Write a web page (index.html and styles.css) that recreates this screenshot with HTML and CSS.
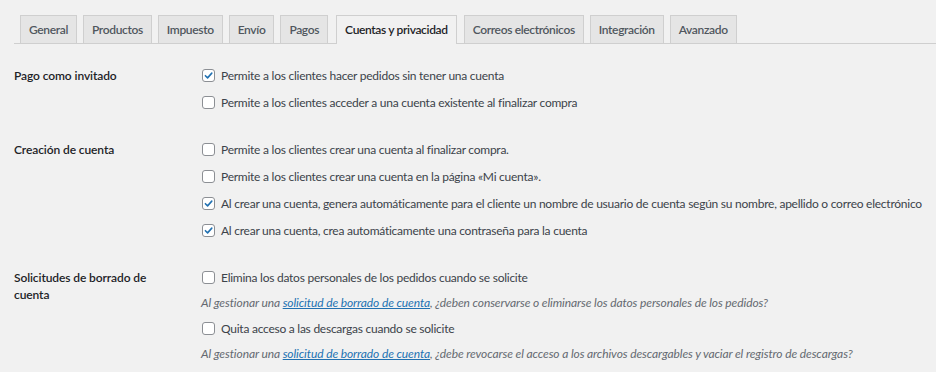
FILE: index.html
```html
<!DOCTYPE html>
<html lang="es">
<head>
<meta charset="utf-8">
<title>Cuentas y privacidad</title>
<link rel="stylesheet" href="styles.css">
</head>
<body>
<nav class="tabs">
  <a class="tab">General</a>
  <a class="tab">Productos</a>
  <a class="tab">Impuesto</a>
  <a class="tab">Envío</a>
  <a class="tab">Pagos</a>
  <a class="tab active">Cuentas y privacidad</a>
  <a class="tab">Correos electrónicos</a>
  <a class="tab">Integración</a>
  <a class="tab">Avanzado</a>
</nav>

<div class="settings">
  <section class="row">
    <div class="label">Pago como invitado</div>
    <div class="field">
      <label class="opt"><span class="cb checked"><svg viewBox="0 0 12 12"><path d="M2.6 6.2 5 8.6 9.6 3.4"/></svg></span><span>Permite a los clientes hacer pedidos sin tener una cuenta</span></label>
      <label class="opt"><span class="cb"></span><span>Permite a los clientes acceder a una cuenta existente al finalizar compra</span></label>
    </div>
  </section>

  <section class="row">
    <div class="label">Creación de cuenta</div>
    <div class="field">
      <label class="opt"><span class="cb"></span><span>Permite a los clientes crear una cuenta al finalizar compra.</span></label>
      <label class="opt"><span class="cb"></span><span>Permite a los clientes crear una cuenta en la página «Mi cuenta».</span></label>
      <label class="opt"><span class="cb checked"><svg viewBox="0 0 12 12"><path d="M2.6 6.2 5 8.6 9.6 3.4"/></svg></span><span>Al crear una cuenta, genera automáticamente para el cliente un nombre de usuario de cuenta según su nombre, apellido o correo electrónico</span></label>
      <label class="opt"><span class="cb checked"><svg viewBox="0 0 12 12"><path d="M2.6 6.2 5 8.6 9.6 3.4"/></svg></span><span>Al crear una cuenta, crea automáticamente una contraseña para la cuenta</span></label>
    </div>
  </section>

  <section class="row">
    <div class="label">Solicitudes de borrado de cuenta</div>
    <div class="field">
      <label class="opt"><span class="cb"></span><span>Elimina los datos personales de los pedidos cuando se solicite</span></label>
      <p class="help">Al gestionar una <a href="#">solicitud de borrado de cuenta</a>, ¿deben conservarse o eliminarse los datos personales de los pedidos?</p>
      <label class="opt"><span class="cb"></span><span>Quita acceso a las descargas cuando se solicite</span></label>
      <p class="help">Al gestionar una <a href="#">solicitud de borrado de cuenta</a>, ¿debe revocarse el acceso a los archivos descargables y vaciar el registro de descargas?</p>
    </div>
  </section>
</div>
</body>
</html>
```

FILE: styles.css
```css
html, body {
  margin: 0;
  padding: 0;
  background: #f1f1f1;
}

body {
  font-family: Lato, "Open Sans", sans-serif;
  font-size: 12px;
  color: #3c434a;
  padding-left: 14px;
}

.tabs {
  display: flex;
  gap: 6px;
  padding: 15px 0 0 6px;
  border-bottom: 1px solid #cfcfcf;
}

.tab {
  display: block;
  height: 27px;
  line-height: 27px;
  padding: 0 8px;
  border: 1px solid #cfcfcf;
  border-bottom: none;
  background: #e5e5e5;
  color: #50575e;
  font-size: 12px;
  font-weight: 600;
  letter-spacing: -0.35px;
  white-space: nowrap;
}

.tab.active {
  background: #f1f1f1;
  color: #1d2327;
  height: 28px;
  margin-bottom: -1px;
  margin-left: 2px;
  margin-right: 1px;
}

.settings {
  padding-top: 18px;
}

.row {
  display: flex;
  padding-bottom: 20px;
}

.label {
  width: 150px;
  flex: none;
  padding-top: 5px;
  margin-right: 38px;
  font-weight: 600;
  color: #1d2327;
  line-height: 17px;
  font-size: 12px;
  letter-spacing: -0.1px;
}

.field {
  display: flex;
  flex-direction: column;
}

.opt {
  display: flex;
  align-items: center;
  height: 27px;
  white-space: nowrap;
  font-size: 12px;
  letter-spacing: -0.25px;
}

.cb {
  width: 11px;
  height: 11px;
  border: 1px solid #8c8f94;
  border-radius: 3px;
  background: #fff;
  margin-right: 6px;
  flex: none;
  display: flex;
}

.cb svg {
  width: 11px;
  height: 11px;
}

.cb svg path {
  fill: none;
  stroke: #2271b1;
  stroke-width: 1.7;
  stroke-linecap: round;
  stroke-linejoin: round;
}

.help {
  margin: 0;
  height: 24px;
  line-height: 24px;
  font-style: italic;
  font-size: 12px;
  letter-spacing: -0.1px;
  color: #646970;
  white-space: nowrap;
  margin-left: -1px;
}

.help a {
  color: #2271b1;
  text-decoration: underline;
}
```
